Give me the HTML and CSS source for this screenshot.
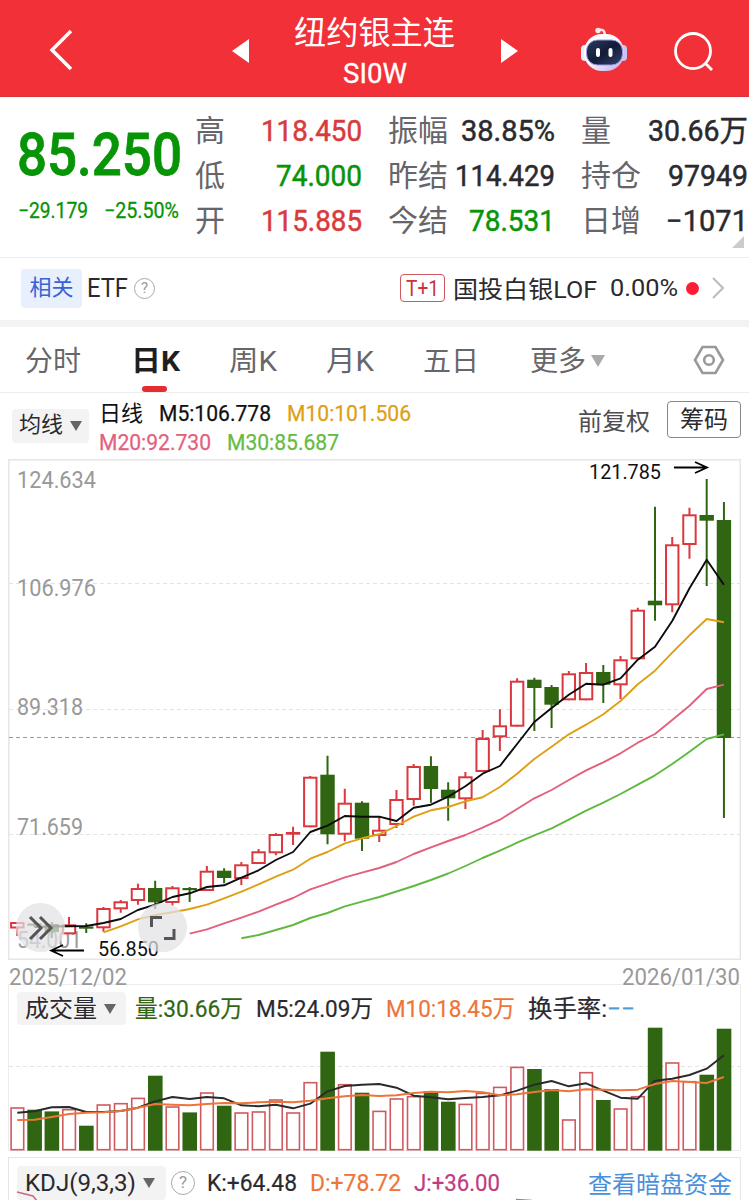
FILE: index.html
```html
<!DOCTYPE html>
<html lang="zh-CN">
<head>
    <meta charset="UTF-8">
    <meta name="viewport" content="width=device-width, initial-scale=1.0">
    <title>纽约银主连 SI0W</title>
    <link rel="stylesheet" href="styles.css">
</head>
<body>
    <header class="topbar">
        <svg class="back" width="26" height="44" viewBox="0 0 26 44"><path d="M23 3 L4 22 L23 41"/></svg>
        <svg class="prev" width="17" height="24" viewBox="0 0 17 24"><path d="M17 0 V24 L0 12Z"/></svg>
        <div class="title">
            <h1><span class="fit" data-w="161">纽约银主连</span></h1>
            <p><span class="fit" data-w="64">SI0W</span></p>
        </div>
        <svg class="next" width="17" height="24" viewBox="0 0 17 24"><path d="M0 0 V24 L17 12Z"/></svg>
        <svg class="robot" width="48" height="46" viewBox="0 0 48 46">
            <defs>
                <linearGradient id="shell" x1="0" y1="0" x2="1" y2="1">
                    <stop offset="0.4" stop-color="#fff"/>
                    <stop offset="1" stop-color="#b9a9ee"/>
                </linearGradient>
                <linearGradient id="face" x1="0" y1="0" x2="1" y2="1">
                    <stop offset="0" stop-color="#2c3c5c"/>
                    <stop offset="0.5" stop-color="#121c38"/>
                    <stop offset="1" stop-color="#35436c"/>
                </linearGradient>
            </defs>
            <path d="M18 4 Q25 2 25 10" fill="none" stroke="#ffdfe2" stroke-width="2.4"/>
            <circle cx="18" cy="4.500" r="2.700" fill="#ffe6e8"/>
            <rect x="1" y="19" width="8" height="16" rx="4" fill="#e4edff"/>
            <rect x="39" y="19" width="8" height="16" rx="4" fill="#c9c4f5"/>
            <rect x="4" y="8" width="40" height="37" rx="18" fill="url(#shell)"/>
            <rect x="6.500" y="14" width="36" height="25" rx="11" fill="url(#face)" stroke="#9d9be0" stroke-width="1"/>
            <rect x="16" y="22" width="4" height="9" rx="2" fill="#fff"/>
            <rect x="28.500" y="22" width="4" height="9" rx="2" fill="#fff"/>
        </svg>
        <svg class="search" width="42" height="42" viewBox="0 0 42 42"><circle cx="20" cy="20" r="17.500"/><path d="M32 32 L39 39"/></svg>
    </header>

    <section class="quote">
        <div class="price">
            <strong><span class="fit" data-w="165">85.250</span></strong>
            <div class="change">
                <span class="fit" data-w="70">−29.179</span>
                <span class="fit" data-w="75">−25.50%</span>
            </div>
        </div>
        <dl class="stats">
            <div><dt>高</dt><dd class="up"><span class="fit" data-w="101">118.450</span></dd></div>
            <div><dt>振幅</dt><dd><span class="fit" data-w="94">38.85%</span></dd></div>
            <div><dt>量</dt><dd><span class="fit" data-w="100">30.66万</span></dd></div>
            <div><dt>低</dt><dd class="down"><span class="fit" data-w="86">74.000</span></dd></div>
            <div><dt>昨结</dt><dd><span class="fit" data-w="100">114.429</span></dd></div>
            <div><dt>持仓</dt><dd><span class="fit" data-w="80">97949</span></dd></div>
            <div><dt>开</dt><dd class="up"><span class="fit" data-w="101">115.885</span></dd></div>
            <div><dt>今结</dt><dd class="down"><span class="fit" data-w="86">78.531</span></dd></div>
            <div><dt>日增</dt><dd><span class="fit" data-w="82">−1071</span></dd></div>
        </dl>
        <i class="corner"></i>
    </section>

    <section class="related">
        <span class="tag">相关</span>
        <span class="fit etf" data-w="41">ETF</span>
        <span class="help">?</span>
        <span class="t1"><span class="fit" data-w="33">T+1</span></span>
        <span class="fit fund" data-w="144">国投白银LOF</span>
        <span class="fit rate" data-w="68">0.00%</span>
        <i class="dot"></i>
        <svg class="more" width="14" height="24" viewBox="0 0 14 24"><path d="M2 2 L12 12 L2 22"/></svg>
    </section>

    <nav class="tabs">
        <a>分时</a>
        <a class="active"><span class="fit" data-w="49">日K</span></a>
        <a><span class="fit" data-w="48">周K</span></a>
        <a><span class="fit" data-w="48">月K</span></a>
        <a>五日</a>
        <a>更多<i class="tri"></i></a>
        <svg class="gear" width="32" height="30" viewBox="0 0 32 30"><path d="M9.500 2 H22.500 L30 15 L22.500 28 H9.500 L2 15Z"/><circle cx="16" cy="15" r="4.800"/></svg>
    </nav>

    <section class="legend">
        <span class="picker">均线<i class="tri"></i></span>
        <div class="ma">
            <div>
                <span>日线</span>
                <span class="fit" data-w="112">M5:106.778</span>
                <span class="fit m10" data-w="124">M10:101.506</span>
            </div>
            <div>
                <span class="fit m20" data-w="112">M20:92.730</span>
                <span class="fit m30" data-w="112">M30:85.687</span>
            </div>
        </div>
        <span class="adjust">前复权</span>
        <span class="chips">筹码</span>
    </section>

    <section class="kline">
        <svg id="kline" width="733" height="502" viewBox="8 459 733 502"></svg>
        <button class="round forward">
            <svg width="26" height="26" viewBox="0 0 26 26"><path d="M2 2 L13 13 L2 24 M12 2 L23 13 L12 24"/></svg>
        </button>
        <button class="round expand">
            <svg width="28" height="28" viewBox="0 0 28 28"><path d="M2.500 13 V3.500 H13 M25 15 V24.500 H15"/></svg>
        </button>
    </section>
    <div class="dates">
        <span class="fit" data-w="118">2025/12/02</span>
        <span class="fit" data-w="118">2026/01/30</span>
    </div>

    <section class="volume">
        <div class="row">
            <span class="picker">成交量<i class="tri"></i></span>
            <span class="fit vol" data-w="108">量:30.66万</span>
            <span class="fit" data-w="117">M5:24.09万</span>
            <span class="fit orange" data-w="129">M10:18.45万</span>
            <span class="fit turnover" data-w="107">换手率:<em>−−</em></span>
        </div>
        <svg id="volume" width="733" height="126" viewBox="8 1025 733 126"></svg>
    </section>

    <section class="kdj">
        <span class="picker"><span class="fit" data-w="111">KDJ(9,3,3)</span><i class="tri"></i></span>
        <span class="help">?</span>
        <span class="fit" data-w="90">K:+64.48</span>
        <span class="fit orange" data-w="91">D:+78.72</span>
        <span class="fit magenta" data-w="86">J:+36.00</span>
        <a class="link">查看暗盘资金</a>
        <svg class="kdj-line" width="733" height="10" viewBox="8 1190 733 10"><path d="M17 1192 L33 1196 L37 1201 M516 1199.500 L532 1200.500"/></svg>
    </section>

    <script src="chart.js"></script>
</body>
</html>
```
FILE: styles.css
```css
* {
    box-sizing: border-box;
}
body {
    margin: 0;
    width: 749px;
    height: 1200px;
    overflow: hidden;
    background: #fff;
    color: #2a2a2e;
    font-family: Roboto, "Noto Sans CJK SC", sans-serif;
    font-size: 24px;
}
h1, p, dl, dd {
    margin: 0;
    font-weight: normal;
}
.fit {
    display: inline-block;
    white-space: nowrap;
    transform-origin: 0 50%;
    flex: none;
}
.tri {
    display: inline-block;
    border: 6px solid transparent;
    border-top: 10px solid #666;
    border-bottom: 0;
}

/* header */
.topbar {
    display: flex;
    align-items: center;
    height: 97px;
    padding-left: 48px;
    background: #f23038;
    border-bottom: 1px solid #dc3038;
    color: #fff;
}
.topbar svg {
    flex: none;
}
.back, .search {
    fill: none;
    stroke: #fff;
    stroke-width: 3.5;
}
.back {
    margin-top: 3px;
}
.prev, .next {
    fill: #fff;
    margin-top: 5px;
}
.prev {
    margin-left: 158px;
}
.title {
    width: 161px;
    margin: 0 46px 0 45px;
    padding-top: 7px;
    text-align: center;
}
.title h1 {
    height: 45px;
    font-size: 32px;
    line-height: 45px;
}
.title p {
    height: 36px;
    font-size: 27px;
    line-height: 37px;
    -webkit-text-stroke: 0.3px #fff;
}
.robot {
    margin: 2px 0 0 62px;
}
.search {
    stroke-width: 2.8;
    margin: 7px 0 0 45px;
}

/* quote */
.quote {
    position: relative;
    display: flex;
    height: 161px;
    padding: 11px 0 0 18px;
    border-bottom: 1px solid #ececec;
}
.price {
    width: 177px;
    padding-top: 13px;
    color: #079407;
}
.price strong {
    display: block;
    height: 68px;
    margin-left: -1px;
    font-size: 60px;
    font-weight: 500;
    line-height: 68px;
    -webkit-text-stroke: 0.8px currentColor;
}
.change {
    display: flex;
    gap: 16px;
    margin-top: 9px;
    font-size: 21.5px;
    line-height: 26px;
    -webkit-text-stroke: 0.3px currentColor;
}
.stats {
    display: grid;
    grid-template-columns: repeat(3, 167px);
    grid-auto-rows: 45px;
    column-gap: 26px;
}
.stats div {
    display: flex;
    justify-content: space-between;
    line-height: 45px;
}
.stats dt {
    font-size: 30px;
    color: #65656a;
}
.stats dd {
    font-size: 29.5px;
    padding-top: 1px;
    -webkit-text-stroke: 0.5px currentColor;
}
.up {
    color: #d93a3c;
}
.down {
    color: #079407;
}
.corner {
    position: absolute;
    right: 5px;
    bottom: 9px;
    border-left: 12px solid transparent;
    border-bottom: 12px solid #ccc;
}

/* related fund */
.related {
    display: flex;
    align-items: center;
    height: 69px;
    padding: 0 24px 2px 21px;
    border-bottom: 7px solid #f3f3f4;
}
.tag {
    width: 61px;
    height: 39px;
    border-radius: 4px;
    background: #e8effd;
    color: #3962d4;
    font-size: 22px;
    line-height: 38px;
    text-align: center;
}
.etf {
    margin-left: 5px;
    font-size: 25px;
}
.help {
    flex: none;
    width: 21px;
    height: 21px;
    margin-left: 6px;
    border: 1.5px solid #aaa;
    border-radius: 50%;
    color: #999;
    font-size: 15px;
    line-height: 18px;
    text-align: center;
}
.t1 {
    height: 28px;
    width: 45px;
    margin-left: auto;
    border: 1px solid #d0585c;
    border-radius: 4px;
    color: #c9353a;
    font-size: 22px;
    line-height: 27px;
    padding-left: 5px;
}
.fund {
    margin: -2px 0 0 8px;
}
.rate {
    margin-left: 13px;
}
.dot {
    width: 13px;
    height: 13px;
    margin-left: 8px;
    border-radius: 50%;
    background: #fb1d36;
}
.more {
    margin-left: 12px;
    fill: none;
    stroke: #bbb;
    stroke-width: 2;
}

/* tabs */
.tabs {
    display: flex;
    height: 66px;
    padding-left: 25px;
    border-bottom: 1px solid #ececec;
    color: #66666b;
    font-size: 28px;
    line-height: 69px;
}
.tabs a {
    position: relative;
    height: 65px;
    margin-right: 49px;
    white-space: nowrap;
}
.tabs a:nth-child(1) {
    margin-right: 50px;
}
.tabs a:nth-child(5) {
    margin-right: 51px;
}
.tabs a:nth-child(6) {
    margin-right: 0;
}
.tabs .active {
    color: #1f1f22;
    font-weight: bold;
}
.active::after {
    content: "";
    position: absolute;
    left: 11px;
    bottom: 0;
    width: 25px;
    height: 6px;
    border-radius: 3px;
    background: #e52d30;
}
.tabs .tri {
    margin: 0 0 4px 5px;
    border-width: 12px 7.5px 0;
    border-top-color: #aaa;
}
.gear {
    margin: 18px 24px 0 auto;
    fill: none;
    stroke: #999;
    stroke-width: 2.6;
}

/* moving averages */
.legend {
    display: flex;
    height: 66px;
    padding-left: 12px;
    font-size: 22px;
}
.picker {
    display: flex;
    align-items: center;
    flex: none;
    background: #f3f3f4;
    border-radius: 4px;
    white-space: nowrap;
}
.legend .picker {
    width: 77px;
    height: 34px;
    margin-top: 16px;
    padding-left: 7px;
    line-height: 30px;
    padding-bottom: 3px;
}
.picker .tri {
    margin-left: 7px;
}
.legend .tri {
    margin-top: 3px;
}
.ma {
    width: 479px;
    margin: 6px 0 0 10px;
    color: #111;
}
.ma div {
    display: flex;
    gap: 16px;
    height: 29px;
    line-height: 29px;
}
.ma .fit {
    -webkit-text-stroke: 0.25px currentColor;
}
.ma .m10 {
    color: #dea012;
}
.ma .m20 {
    color: #e4607c;
}
.ma .m30 {
    color: #66bb44;
}
.adjust {
    font-size: 24px;
    line-height: 59px;
    width: 89px;
    color: #4d4d52;
}
.chips {
    width: 74px;
    height: 37px;
    margin-top: 8px;
    border: 1px solid #85858a;
    border-radius: 4px;
    font-size: 24px;
    line-height: 37px;
    text-align: center;
}

/* charts */
.kline {
    position: relative;
    height: 502px;
    padding-left: 8px;
}
.kline > svg, .volume > svg {
    display: block;
}
.round {
    position: absolute;
    top: 444px;
    display: flex;
    align-items: center;
    justify-content: center;
    width: 49px;
    height: 49px;
    padding: 0;
    border: 0;
    border-radius: 50%;
    background: rgba(226, 226, 228, 0.72);
}
.round path {
    fill: none;
    stroke: #555;
    stroke-width: 3;
}
.forward {
    left: 16px;
}
.expand {
    left: 138px;
}
.frame {
    fill: none;
    stroke: #e6e6e8;
    stroke-width: 1.5;
}
.grid {
    stroke: #e4e4e6;
    stroke-dasharray: 4 3;
}
.last {
    stroke: #a29f6c;
    stroke-dasharray: 4 3;
}
.axis {
    fill: #999;
    font-size: 24px;
}
.mark {
    fill: #111;
    font-size: 21px;
}
.arrow {
    fill: none;
    stroke: #000;
    stroke-width: 1.8;
}
.rise {
    fill: #fff;
    stroke: #d9393e;
    stroke-width: 2;
}
.fall {
    fill: #306612;
    stroke: #306612;
    stroke-width: 2;
}
.bar.rise {
    stroke: #cf5a60;
    stroke-width: 1.6;
}
.line {
    fill: none;
    stroke-width: 1.9;
    stroke-linejoin: round;
}
.dates {
    display: flex;
    justify-content: space-between;
    height: 23px;
    padding: 0 9px;
    color: #999;
    line-height: 32px;
}
.volume {
    width: 733px;
    height: 167px;
    margin-left: 8px;
    padding-top: 7px;
    box-shadow: inset 0 0 0 1px #ececee;
}
.row {
    display: flex;
    height: 34px;
    padding-left: 9px;
    line-height: 36px;
}
.row .picker {
    width: 109px;
    height: 33px;
    margin: 1px 9px 0 0;
    padding-left: 8px;
}
.volume .vol {
    color: #306612;
}
.orange {
    color: #ed7539;
}
.turnover em {
    color: #4a9ddd;
    font-style: normal;
}
.kdj {
    position: relative;
    display: flex;
    align-items: center;
    width: 733px;
    height: 50px;
    margin: 6px 0 0 8px;
    padding: 0 8px 0 8px;
    border: 1px solid #e6e6e8;
    border-bottom: 0;
}
.kdj .picker {
    width: 149px;
    height: 34px;
    padding-left: 8px;
    line-height: 34px;
}
.kdj .help {
    width: 24px;
    height: 24px;
    margin: 0 12px 0 5px;
    font-size: 17px;
    line-height: 21px;
}
.magenta {
    color: #c13b80;
}
.link {
    margin-left: auto;
    color: #4a8fdb;
}
.kdj-line {
    position: absolute;
    left: -1px;
    bottom: 7px;
    fill: none;
    stroke: #c9698a;
    stroke-width: 1.5;
}
.row .fit, .kdj > .fit {
    -webkit-text-stroke: 0.2px currentColor;
}
```
FILE: chart.js
```js
document.querySelectorAll('.fit').forEach(el => {
    const natural = el.getBoundingClientRect().width;
    const w = Number(el.dataset.w);
    const gap = el.parentNode.matches('.row, .kdj') ? 13 : 0;
    el.style.transform = `scaleX(${w / natural})`;
    el.style.marginRight = `${w - natural + gap}px`;
});

const x = i => 17.3 + i * 17.235;

// type, high, body top, body bottom, low, volume top
const candles = [
    ['r', 922, 922, 928.5, 936, 1107.3], ['g', 921, 923.5, 924.5, 927, 1110],
    ['g', 922, 924, 932, 938, 1111.7], ['r', 917, 924.3, 934.3, 934.3, 1109],
    ['g', 923.3, 926.5, 927.5, 933, 1126], ['r', 907, 908, 928.3, 931.7, 1104.3],
    ['r', 900, 901.3, 909.3, 912.7, 1103], ['r', 883.7, 888, 901, 904.7, 1097.7],
    ['g', 880.7, 888, 902.3, 909, 1076], ['r', 886, 887.3, 903, 905.7, 1106.3],
    ['g', 887, 888, 890, 902, 1112.7], ['r', 866, 870.7, 891, 891, 1092.3],
    ['g', 868.3, 870.7, 878, 883.3, 1106], ['r', 862, 864.3, 879, 885, 1112.3],
    ['r', 849, 851.3, 864, 864, 1111.3], ['r', 833, 834, 853.3, 855.3, 1099.3],
    ['r', 826.7, 832, 834.7, 845, 1112.3], ['r', 776, 776.7, 827.3, 827.3, 1082],
    ['g', 755.7, 774.7, 834.3, 844.3, 1052], ['r', 788.7, 802.7, 834.7, 841.3, 1084],
    ['g', 801.3, 802.7, 838.7, 851, 1093], ['r', 816.7, 829.7, 836, 842, 1110.7],
    ['r', 790, 799, 825, 828, 1098.3], ['r', 764, 766, 800, 805.7, 1096],
    ['g', 756.3, 766, 789, 802.7, 1091.7], ['g', 782.3, 789.7, 798.3, 820.7, 1102],
    ['r', 772, 776.3, 799.3, 809, 1103.7], ['r', 730, 738, 772, 772, 1092.7],
    ['r', 709.3, 725.3, 737.3, 751, 1086.7], ['r', 678.3, 680.7, 726.7, 726.7, 1066.7],
    ['g', 677.7, 679.7, 688, 731, 1069.3], ['g', 685, 687, 704.7, 728, 1089.3],
    ['r', 671, 673.3, 700.3, 700.3, 1119.3], ['r', 663, 672, 700.3, 700.3, 1072],
    ['g', 665, 672, 684.7, 703, 1100.3], ['r', 656, 659.3, 685.3, 699, 1108.3],
    ['r', 607.7, 609.7, 659.3, 659.3, 1096], ['g', 506.7, 600.7, 605.3, 620.7, 1028],
    ['r', 537, 544.3, 605.3, 612.3, 1062.3], ['r', 507.7, 514.3, 545, 558.7, 1081],
    ['g', 479, 515, 520.7, 586, 1075], ['g', 502, 520, 738, 818, 1029]
];

const ma5 = [927, 926.5, 926.3, 926, 923, 919, 910, 904.7, 897, 893.3, 887, 885.3, 877.7, 870.3, 860, 852, 832, 825.7, 816, 816.7, 816.7, 821, 807.7, 804.7, 796.7, 786.3, 773.7, 766, 744, 722, 708, 694.7, 683.7, 684.7, 678.3, 659.7, 646.7, 621, 588.3, 559.7, 584.7];
const ma10 = [932.3, 926.3, 919.3, 915, 912.3, 909, 904.7, 898.3, 891.7, 884.3, 876.7, 869.7, 858.7, 852, 843.3, 838.3, 834.3, 826, 816.7, 810.3, 807, 801.3, 797.3, 787, 773.7, 759, 746.7, 734.3, 724.7, 714.3, 701, 684.3, 670.7, 652.7, 635.3, 619, 622.3];
const ma20 = [933.7, 929.3, 923.3, 917.7, 911.7, 904.7, 898, 889.3, 883.7, 877.3, 872.7, 868, 862, 854, 847.3, 841, 835, 827.7, 819.7, 809, 798.3, 790, 780, 770.3, 762.3, 753.3, 742.7, 734, 720, 705.7, 689, 684.7];
const ma30 = [938.3, 935, 930, 925, 918, 913, 906.3, 901.7, 897, 891.5, 886, 880, 873.5, 866, 858, 850.7, 842.7, 835.3, 828.3, 819.7, 810.7, 802.7, 794, 784.7, 775.3, 764, 751.7, 739, 734.3];
const vol5 = [1112.7, 1111.3, 1107.3, 1107, 1112, 1112, 1111, 1107.7, 1101.3, 1097, 1099, 1097, 1098.3, 1105.3, 1106.3, 1104.7, 1108.3, 1103.7, 1091.3, 1086, 1084.7, 1084, 1087.7, 1095.7, 1097.3, 1099.3, 1098, 1097, 1095.3, 1090.7, 1084.7, 1081, 1086.3, 1083.3, 1090.7, 1097.7, 1098.7, 1080.7, 1078.7, 1075, 1068.7, 1055.3];
const vol10 = [1120, 1119.7, 1117, 1114, 1112.7, 1112.3, 1111, 1107.7, 1104, 1104.7, 1105.3, 1104, 1103, 1103.3, 1102.3, 1101.7, 1102.3, 1100.7, 1098.3, 1096.3, 1095, 1096, 1095.3, 1093, 1091.7, 1092.3, 1091, 1092.3, 1095.3, 1094.3, 1092, 1090, 1091.3, 1089.3, 1089.7, 1090.3, 1089.7, 1084, 1081, 1082, 1083, 1077];

function line(values, color) {
    const start = candles.length - values.length;
    const pts = values.map((v, i) => `${x(start + i).toFixed(1)},${v}`).join(' ');
    return `<polyline class="line" stroke="${color}" points="${pts}"/>`;
}

function hline(y, cls) {
    return `<path class="${cls}" d="M9 ${y} H740"/>`;
}

function label(text, lx, ly, w, cls) {
    return `<text class="${cls}" x="${lx}" y="${ly}" textLength="${w}" lengthAdjust="spacingAndGlyphs">${text}</text>`;
}

let k = '<rect class="frame" x="8.75" y="459.75" width="731.5" height="499.500"/>';
k += hline(583.5, 'grid') + hline(709.5, 'grid') + hline(834.5, 'grid') + hline(737.5, 'last');
k += label('124.634', 17, 488, 79, 'axis') + label('106.976', 17, 596, 79, 'axis');
k += label('89.318', 17, 715, 66, 'axis') + label('71.659', 17, 835, 66, 'axis') + label('54.001', 17, 948, 65, 'axis');
candles.forEach(([type, high, top, bottom, low], i) => {
    const cls = type === 'r' ? 'rise' : 'fall';
    const cx = x(i);
    k += `<path class="${cls}" d="M${cx} ${high} V${top + 1} M${cx} ${bottom - 1} V${low}"/>`;
    k += `<rect class="${cls}" x="${cx - 6.2}" y="${top + 1}" width="12.400" height="${Math.max(bottom - top - 2, 0.2)}"/>`;
});
k += line(ma5, '#0c0c0c') + line(ma10, '#dea012') + line(ma20, '#e2607c') + line(ma30, '#5fb93f');
k += label('121.785', 589, 479, 72, 'mark') + label('56.850', 98, 956, 61, 'mark');
k += '<path class="arrow" d="M674 467.500 H706 M695 462 L707 467.500 L695 473"/>';
k += '<path class="arrow" d="M84 950.500 H52 M63 945 L51 950.500 L63 956"/>';
document.getElementById('kline').innerHTML = k;

let v = hline(1066.5, 'grid');
candles.forEach(([type, , , , , top], i) => {
    const cls = type === 'r' ? 'rise' : 'fall';
    v += `<rect class="bar ${cls}" x="${x(i) - 6.2}" y="${top + 0.7}" width="12.600" height="${1149 - top}"/>`;
});
v += line(vol5, '#2a2a2a') + line(vol10, '#ed7539');
document.getElementById('volume').innerHTML = v;
```
